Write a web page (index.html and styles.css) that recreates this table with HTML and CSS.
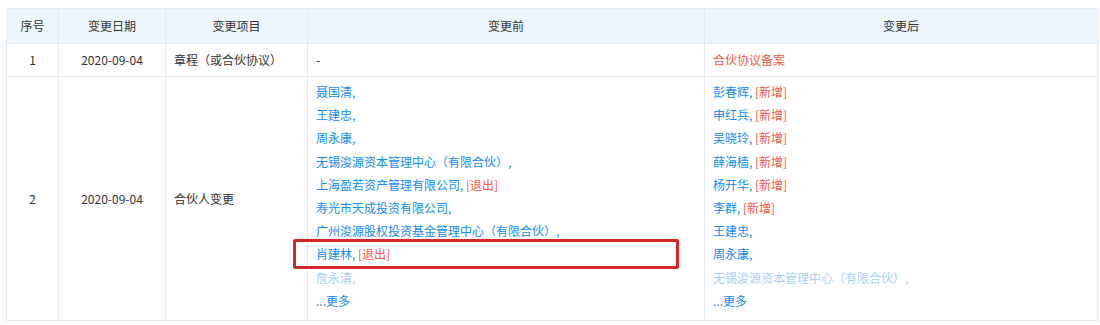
FILE: index.html
```html
<!DOCTYPE html>
<html lang="zh-CN">
<head>
<meta charset="utf-8">
<link rel="stylesheet" href="styles.css">
</head>
<body>
<div class="wrap">
  <table class="ntable">
    <colgroup>
      <col class="c-idx"><col class="c-date"><col class="c-item"><col class="c-before"><col class="c-after">
    </colgroup>
    <thead>
      <tr><th>序号</th><th>变更日期</th><th>变更项目</th><th>变更前</th><th>变更后</th></tr>
    </thead>
    <tbody>
      <tr class="r1">
        <td class="tc">1</td>
        <td class="tc">2020-09-04</td>
        <td>章程（或合伙协议）</td>
        <td>-</td>
        <td class="red">合伙协议备案</td>
      </tr>
      <tr class="r2">
        <td class="tc">2</td>
        <td class="tc">2020-09-04</td>
        <td>合伙人变更</td>
        <td class="list">
          <div class="ln"><a>聂国清</a>,</div>
          <div class="ln"><a>王建忠</a>,</div>
          <div class="ln"><a>周永康</a>,</div>
          <div class="ln"><a>无锡浚源资本管理中心（有限合伙）</a>,</div>
          <div class="ln"><a>上海盈若资产管理有限公司</a>, <span class="red">[退出]</span></div>
          <div class="ln"><a>寿光市天成投资有限公司</a>,</div>
          <div class="ln"><a>广州浚源股权投资基金管理中心（有限合伙）</a>,</div>
          <div class="ln mark-host"><a>肖建林</a>, <span class="red">[退出]</span><span class="mark"></span></div>
          <div class="ln fade"><a>詹永清</a>,</div>
          <div class="ln more">...<a>更多</a></div>
        </td>
        <td class="list">
          <div class="ln"><a>彭春辉</a>, <span class="red">[新增]</span></div>
          <div class="ln"><a>申红兵</a>, <span class="red">[新增]</span></div>
          <div class="ln"><a>吴晓玲</a>, <span class="red">[新增]</span></div>
          <div class="ln"><a>薛海樯</a>, <span class="red">[新增]</span></div>
          <div class="ln"><a>杨开华</a>, <span class="red">[新增]</span></div>
          <div class="ln"><a>李群</a>, <span class="red">[新增]</span></div>
          <div class="ln"><a>王建忠</a>,</div>
          <div class="ln"><a>周永康</a>,</div>
          <div class="ln fade"><a>无锡浚源资本管理中心（有限合伙）</a>,</div>
          <div class="ln more">...<a>更多</a></div>
        </td>
      </tr>
    </tbody>
  </table>
</div>
</body>
</html>
```
FILE: styles.css
```css
html, body {
  margin: 0;
  padding: 0;
  background: #fff;
}
body {
  font-family: "Microsoft YaHei", "Noto Sans CJK SC", "Liberation Sans", sans-serif;
  font-size: 12px;
  color: #333;
}
.wrap {
  padding: 8px 3px 0 6px;
}
.ntable {
  width: 1091px;
  border-collapse: collapse;
  table-layout: fixed;
}
.c-idx { width: 52px; }
.c-date { width: 107px; }
.c-item { width: 142px; }
.c-before { width: 397px; }
.c-after { width: 393px; }
.ntable th,
.ntable td {
  border: 1px solid #e4ebf2;
  padding: 0 8px;
  text-align: left;
  vertical-align: middle;
  font-weight: normal;
}
.ntable th {
  background: #eef6fd;
  text-align: center;
  height: 32px;
  padding-bottom: 2px;
  color: #333;
}
.r1 td {
  height: 30px;
  padding-bottom: 2px;
}
.ntable td.tc {
  text-align: center;
}
.ntable td.list {
  padding-top: 3px;
  padding-bottom: 8px;
}
.ln {
  line-height: 23.2px;
  white-space: nowrap;
  color: #128bed;
}
.ln a {
  color: #128bed;
}
.red {
  color: #ec5a4a;
}
.fade {
  opacity: 0.4;
}
.more {
  color: #5b7fa6;
}
.mark-host {
  position: relative;
}
.mark {
  position: absolute;
  left: -23px;
  top: -3px;
  width: 380px;
  height: 24px;
  border: 3px solid #d7252b;
  border-radius: 2px;
  pointer-events: none;
}
```
